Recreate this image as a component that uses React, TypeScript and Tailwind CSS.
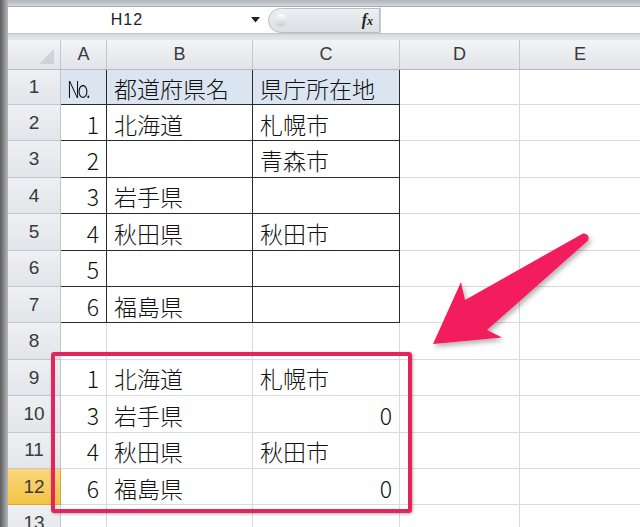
import type { ReactNode } from "react";

type Row = {
  n: string;
  a?: string;
  b?: string;
  c?: string;
  cRight?: boolean;
};

const ROWS: Row[] = [
  { n: "1", a: "No.", b: "都道府県名", c: "県庁所在地" },
  { n: "2", a: "1", b: "北海道", c: "札幌市" },
  { n: "3", a: "2", b: "", c: "青森市" },
  { n: "4", a: "3", b: "岩手県", c: "" },
  { n: "5", a: "4", b: "秋田県", c: "秋田市" },
  { n: "6", a: "5", b: "", c: "" },
  { n: "7", a: "6", b: "福島県", c: "" },
  { n: "8" },
  { n: "9", a: "1", b: "北海道", c: "札幌市" },
  { n: "10", a: "3", b: "岩手県", c: "0", cRight: true },
  { n: "11", a: "4", b: "秋田県", c: "秋田市" },
  { n: "12", a: "6", b: "福島県", c: "0", cRight: true },
  { n: "13" },
];

const CJK = "font-['Noto_Sans_CJK_JP','Noto_Sans',sans-serif]";

function Cell({
  w,
  dark,
  blue,
  right,
  children,
}: {
  w: string;
  dark?: boolean;
  blue?: boolean;
  right?: boolean;
  children?: ReactNode;
}) {
  return (
    <div
      className={`${w} h-full shrink-0 flex items-center pt-[3px] border-r border-b text-[23px] font-light leading-none text-[#111] ${CJK} ${
        dark ? "border-[#2a2a2a]" : "border-[#d8dadd]"
      } ${blue ? "bg-[#dbe5f1]" : "bg-white"} ${
        right ? "justify-end pr-[7px]" : "pl-[7px]"
      }`}
    >
      {children}
    </div>
  );
}

export default function App() {
  return (
    <div className="relative w-[640px] h-[527px] overflow-hidden bg-white flex font-['Liberation_Sans',sans-serif]">
      {/* window edge */}
      <div className="w-[8px] h-full shrink-0 bg-gradient-to-r from-[#5e5e5e] via-[#8a8a8a] to-[#b5b8bc]" />

      <div className="flex-1 flex flex-col min-w-0">
        {/* ribbon edge */}
        <div className="h-[7px] shrink-0 bg-gradient-to-b from-[#aeb3ba] to-[#d3d7dc] border-b border-[#a9aeb5]" />

        {/* name box + formula bar */}
        <div className="h-[27px] shrink-0 flex items-center bg-white border-b border-[#bfc4ca]">
          <div className="w-[238px] h-full flex items-center justify-center text-[16px] text-[#222] tracking-[1px]">
            H12
          </div>
          <div className="w-[18px] h-full flex items-center justify-center">
            <svg width="9" height="6" viewBox="0 0 9 6">
              <path d="M0 0 H9 L4.5 5.5 Z" fill="#222" />
            </svg>
          </div>
          <div className="ml-[4px] w-[112px] h-[25px] flex items-center justify-end pr-[6px] rounded-l-full bg-gradient-to-b from-[#eef0f3] to-[#dcdfe3] border border-[#b9bec5] relative">
            <div className="absolute left-[6px] top-[5px] w-[12px] h-[13px] rounded-full bg-gradient-to-b from-[#ffffff] to-[#c9cdd2]" />
            <span className="font-['Liberation_Serif',serif] italic font-bold text-[16px] text-[#222]">
              f<span className="text-[12px]">x</span>
            </span>
          </div>
          <div className="flex-1 h-full bg-white border-l border-[#c9cdd2]" />
        </div>

        {/* gap band */}
        <div className="h-[6px] shrink-0 bg-gradient-to-b from-[#d5d9de] to-[#e6e9ec]" />

        {/* column header */}
        <div className="h-[30px] shrink-0 flex bg-gradient-to-b from-[#f3f4f6] to-[#e1e4e8] border-b border-[#b6bbc2] text-[18px] text-[#3a3a3a]">
          <div className="w-[53px] h-full shrink-0 border-r border-[#c3c7cd] relative">
            <svg
              className="absolute right-[6px] bottom-[5px]"
              width="15"
              height="15"
              viewBox="0 0 15 15"
            >
              <path d="M15 0 V15 H0 Z" fill="#cfd3d8" />
            </svg>
          </div>
          <div className="w-[46px] shrink-0 h-full flex items-center justify-center border-r border-[#c3c7cd]">A</div>
          <div className="w-[146px] shrink-0 h-full flex items-center justify-center border-r border-[#c3c7cd]">B</div>
          <div className="w-[147px] shrink-0 h-full flex items-center justify-center border-r border-[#c3c7cd]">C</div>
          <div className="w-[120px] shrink-0 h-full flex items-center justify-center border-r border-[#c3c7cd]">D</div>
          <div className="flex-1 h-full flex items-center justify-center">E</div>
        </div>

        {/* rows */}
        {ROWS.map((r, i) => {
          const inTable = i < 7;
          const isSel = r.n === "12";
          return (
            <div
              key={r.n}
              className={`${i === 0 ? "h-[35px]" : "h-[36.4px]"} shrink-0 flex`}
            >
              <div
                className={`w-[53px] h-full shrink-0 flex items-end justify-center pb-[3px] border-r border-b text-[19px] text-[#3a3a3a] ${
                  isSel
                    ? "bg-gradient-to-b from-[#f9d67a] to-[#f3c442] border-[#d6a83a]"
                    : "bg-gradient-to-b from-[#eef0f3] to-[#e2e5e9] border-[#c3c7cd]"
                }`}
              >
                {r.n}
              </div>
              <Cell w="w-[46px]" dark={inTable} blue={i === 0} right={i !== 0}>
                {r.a === "No." ? (
                  <span className="inline-block tracking-[-3px] scale-x-[0.8] origin-left -ml-[1px]">
                    No.
                  </span>
                ) : (
                  r.a
                )}
              </Cell>
              <Cell w="w-[146px]" dark={inTable} blue={i === 0}>
                {r.b}
              </Cell>
              <Cell w="w-[147px]" dark={inTable} blue={i === 0} right={r.cRight}>
                {r.c}
              </Cell>
              <Cell w="w-[120px]" />
              <div className="flex-1 h-full border-b border-[#d8dadd]" />
            </div>
          );
        })}
      </div>

      {/* highlight box */}
      <div className="absolute left-[51px] top-[352px] w-[361px] h-[161px] border-[4px] border-[#e6245c] rounded-[3px] shadow-[1px_1px_3px_rgba(0,0,0,0.3)]" />

      {/* arrow */}
      <svg
        className="absolute left-0 top-0"
        width="640"
        height="527"
        viewBox="0 0 640 527"
      >
        <defs>
          <filter id="sh" x="-20%" y="-20%" width="140%" height="140%">
            <feDropShadow dx="2" dy="3" stdDeviation="2.5" floodColor="#000" floodOpacity="0.3" />
          </filter>
        </defs>
        <path
          d="M583 233.5 Q587 233 588.5 237 Q589 240 587 241.5 L487 330 L502 337.5 L433 344 L461 282 L465 300 Z"
          fill="#f31a5c"
          filter="url(#sh)"
        />
      </svg>
    </div>
  );
}
